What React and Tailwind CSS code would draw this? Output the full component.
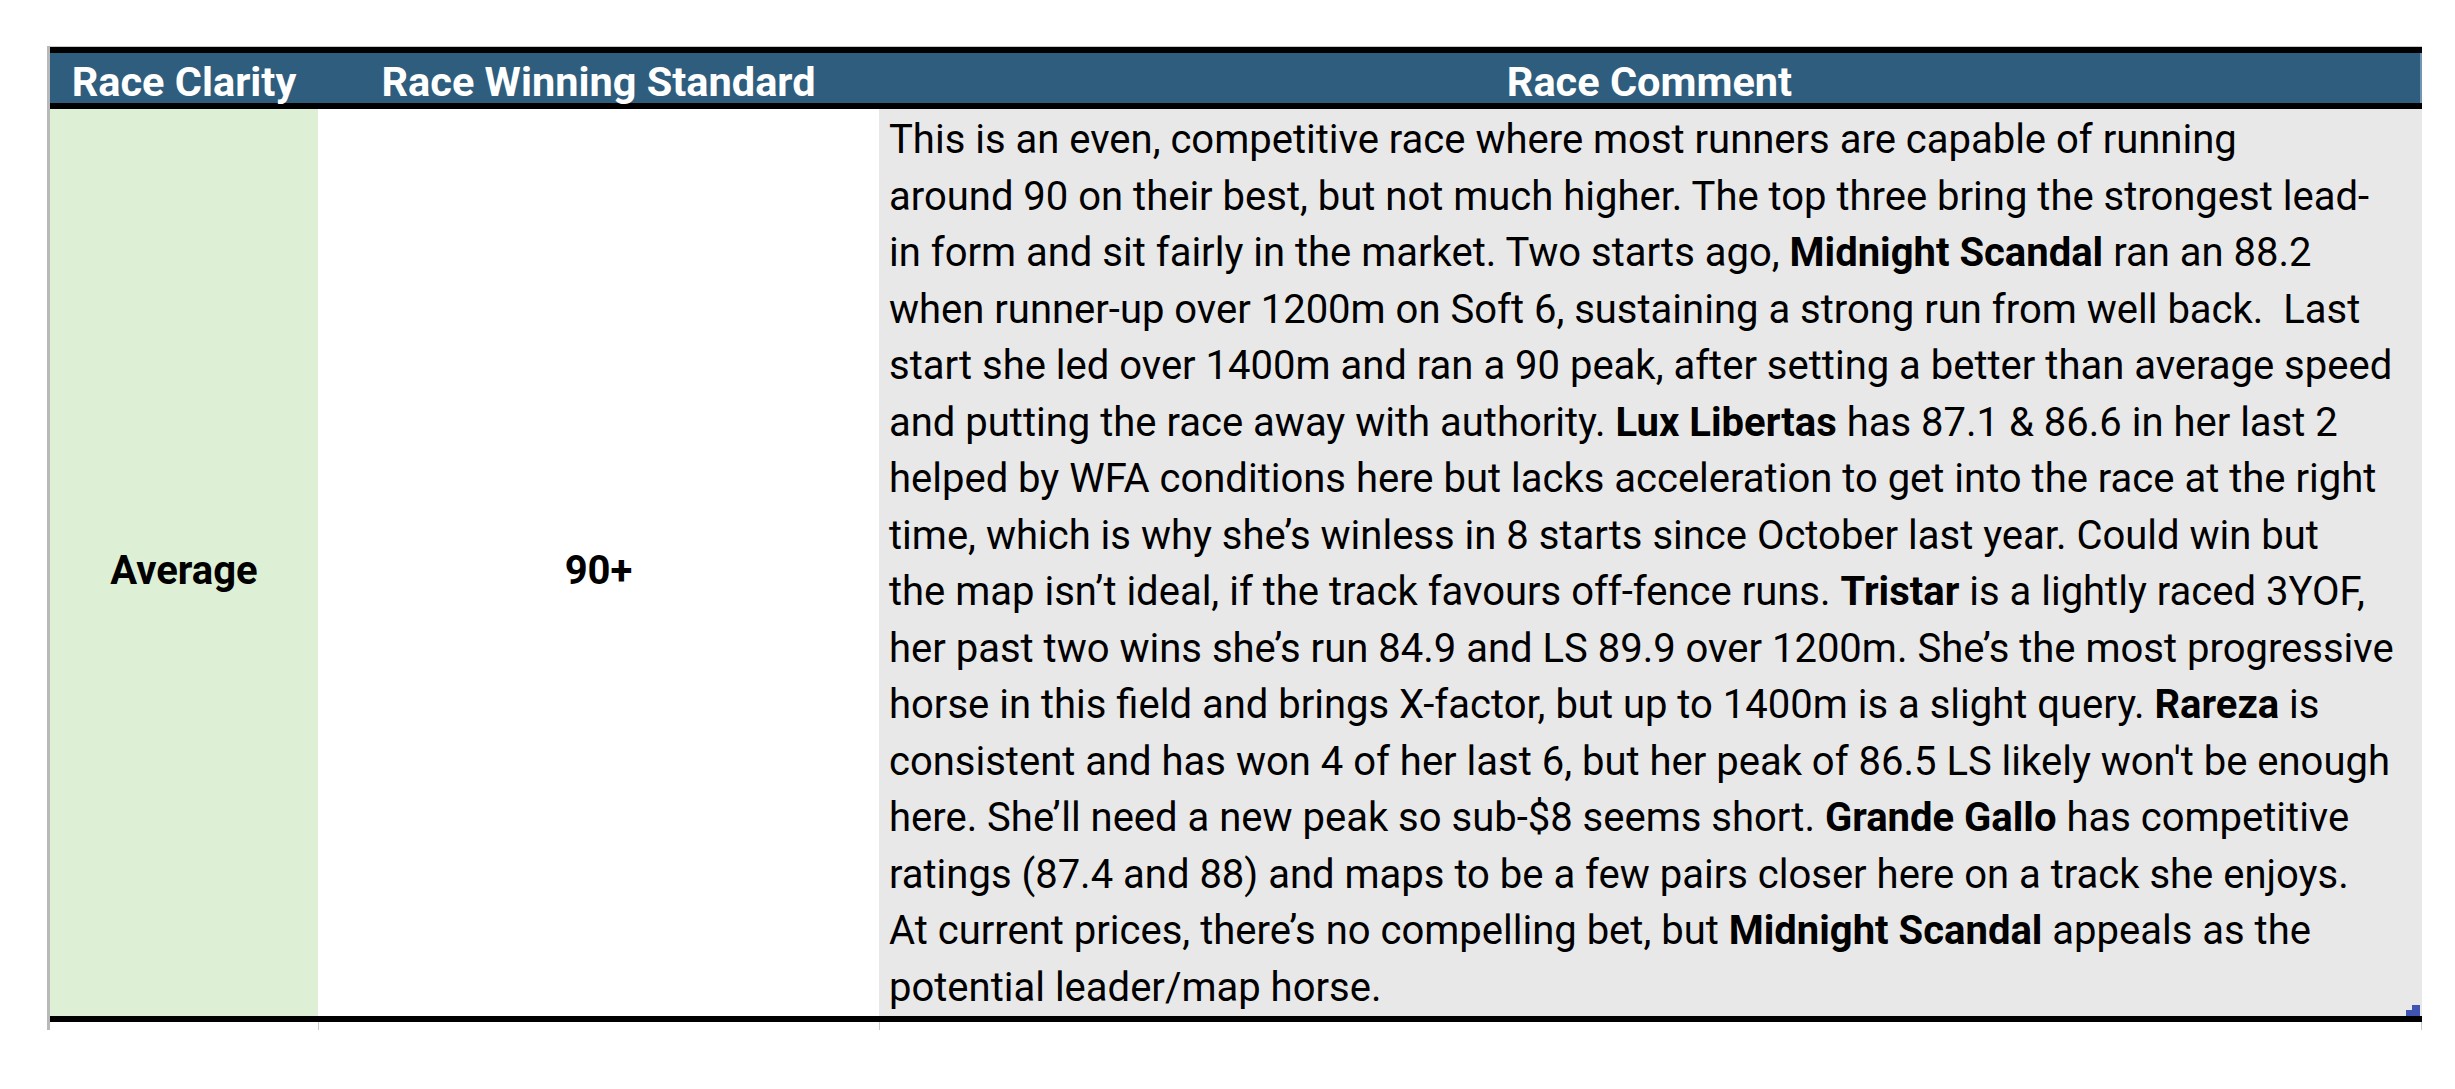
import React from "react";

const lines = [
  ["This is an even, competitive race where most runners are capable of running"],
  ["around 90 on their best, but not much higher. The top three bring the strongest lead-"],
  ["in form and sit fairly in the market. Two starts ago, ", { b: "Midnight Scandal" }, " ran an 88.2"],
  ["when runner-up over 1200m on Soft 6, sustaining a strong run from well back.  Last"],
  ["start she led over 1400m and ran a 90 peak, after setting a better than average speed"],
  ["and putting the race away with authority. ", { b: "Lux Libertas" }, " has 87.1 & 86.6 in her last 2"],
  ["helped by WFA conditions here but lacks acceleration to get into the race at the right"],
  ["time, which is why she\u2019s winless in 8 starts since October last year. Could win but"],
  ["the map isn\u2019t ideal, if the track favours off-fence runs. ", { b: "Tristar" }, " is a lightly raced 3YOF,"],
  ["her past two wins she\u2019s run 84.9 and LS 89.9 over 1200m. She\u2019s the most progressive"],
  ["horse in this field and brings X-factor, but up to 1400m is a slight query. ", { b: "Rareza" }, " is"],
  ["consistent and has won 4 of her last 6, but her peak of 86.5 LS likely won't be enough"],
  ["here. She\u2019ll need a new peak so sub-$8 seems short. ", { b: "Grande Gallo" }, " has competitive"],
  ["ratings (87.4 and 88) and maps to be a few pairs closer here on a track she enjoys."],
  ["At current prices, there\u2019s no compelling bet, but ", { b: "Midnight Scandal" }, " appeals as the"],
  ["potential leader/map horse."],
];

export default function App() {
  return (
    <div
      className="min-h-screen bg-white pt-[46px] pl-[47px] text-black"
      style={{ fontFamily: "Roboto, 'Liberation Sans', sans-serif" }}
    >
      <div className="w-[2375px] border-l-[3px] border-[#b9b9b9]">
        <div className="border-t border-[#c9c9c9]">
          {/* header */}
          <div className="grid grid-cols-[268px_561px_1543px] border-y-[6px] border-black bg-[#2e5d7e] text-white font-bold text-[41.5px] h-[62px] leading-[40px]">
            <div className="text-center pt-[9px]">Race Clarity</div>
            <div className="text-center pt-[9px]">Race Winning Standard</div>
            <div className="text-center pt-[9px] border-r-2 border-[#6f97b5]">Race Comment</div>
          </div>

          {/* body */}
          <div className="grid grid-cols-[268px_561px_1543px] border-b-[6px] border-black">
            <div className="bg-[#ddf0d5] flex items-center justify-center pt-[16px] font-bold text-[40px]">
              Average
            </div>
            <div className="bg-white flex items-center justify-center pt-[16px] font-bold text-[40px]">
              90+
            </div>
            <div className="relative bg-[#e8e8e8] pl-[10px] pt-[3px] text-[40px] leading-[56.5px]">
              {lines.map((segs, i) => (
                <div key={i} className="whitespace-pre">
                  {segs.map((s, j) =>
                    typeof s === "string" ? (
                      <span key={j}>{s}</span>
                    ) : (
                      <span key={j} className="font-bold">
                        {s.b}
                      </span>
                    )
                  )}
                </div>
              ))}
              {/* excel fill handle */}
              <div className="absolute right-[2px] bottom-0 flex flex-col items-end">
                <div className="w-[8px] h-[5px] bg-[#4054b2]" />
                <div className="w-[14px] h-[6px] bg-[#4054b2]" />
              </div>
            </div>
          </div>
        </div>

        {/* gridline ticks below the table */}
        <div className="grid grid-cols-[268px_561px_1543px] h-[8px]">
          <div />
          <div className="border-l border-[#c9c9c9]" />
          <div className="border-l border-r border-[#c9c9c9]" />
        </div>
      </div>
    </div>
  );
}
